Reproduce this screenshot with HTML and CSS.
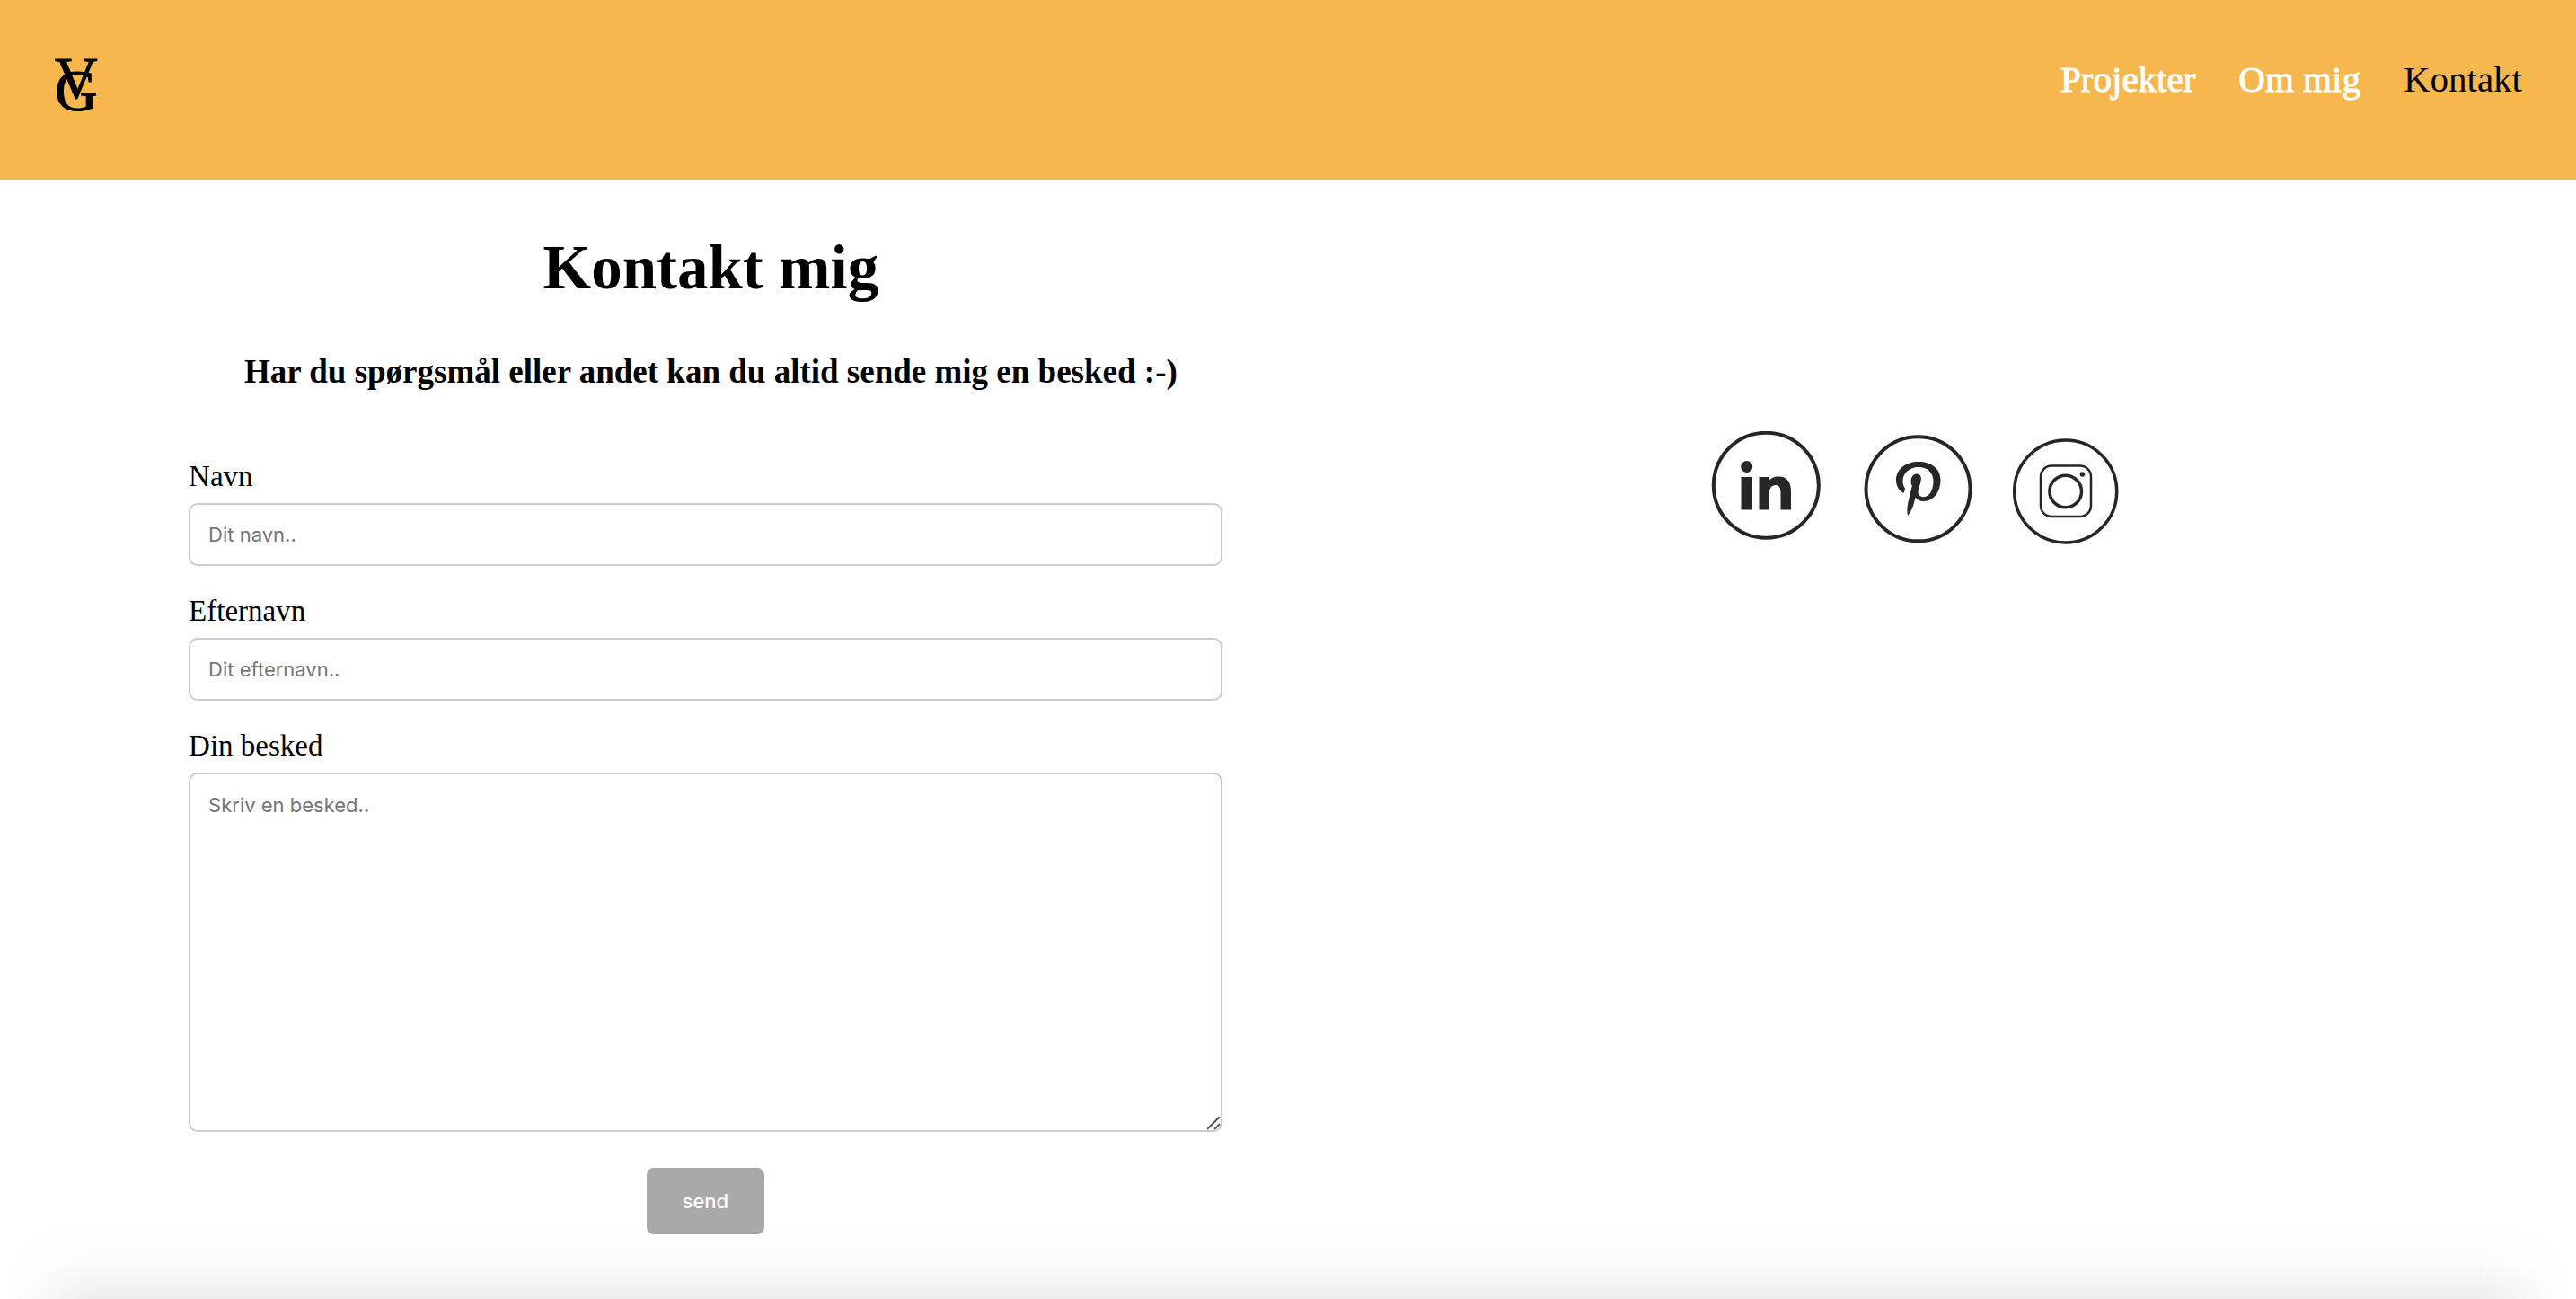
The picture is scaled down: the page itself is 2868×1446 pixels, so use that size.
FILE: index.html
```html
<!DOCTYPE html>
<html lang="da">
<head>
  <meta charset="utf-8">
  <meta name="viewport" content="width=device-width, initial-scale=1">
  <title>Kontakt</title>
  <link rel="stylesheet" href="styles.css">
</head>
<body>
  <header class="site-header">
    <a class="logo" href="#" aria-label="VG">
      <svg width="52" height="76" viewBox="0 0 52 76" aria-hidden="true">
        <text class="logo-letter" x="1" y="63">G</text>
        <text class="logo-letter" x="1" y="49">V</text>
      </svg>
    </a>
    <nav class="site-nav">
      <a href="#">Projekter</a>
      <a href="#">Om mig</a>
      <a class="active" href="#">Kontakt</a>
    </nav>
  </header>

  <main class="contact">
    <section class="contact-main">
      <div class="intro">
        <h1>Kontakt mig</h1>
        <h2>Har du spørgsmål eller andet kan du altid sende mig en besked :-)</h2>
      </div>
      <form class="contact-form">
        <div class="field">
          <label for="fname">Navn</label>
          <input type="text" id="fname" placeholder="Dit navn..">
        </div>
        <div class="field">
          <label for="lname">Efternavn</label>
          <input type="text" id="lname" placeholder="Dit efternavn..">
        </div>
        <div class="field">
          <label for="message">Din besked</label>
          <textarea id="message" placeholder="Skriv en besked.."></textarea>
        </div>
        <button class="send" type="submit">send</button>
      </form>
    </section>

    <section class="social">
      <a href="#" aria-label="LinkedIn">
        <svg width="124" height="128" viewBox="0 0 124 128">
          <circle class="line" cx="62.300" cy="60.300" r="58.500" stroke-width="4"/>
          <circle class="solid" cx="40.700" cy="39.500" r="6.500"/>
          <path class="solid" d="M34.500 51H47v36.500H34.500zM54.500 51H65v5c2-3.600 6-5.500 11-5.500 10 0 14 6 14 17v20H78.500V69c0-6-1.500-9-5.500-9-5 0-7 3.500-7 9v18.500H54.500z"/>
        </svg>
      </a>
      <a href="#" aria-label="Pinterest">
        <svg width="124" height="128" viewBox="0 0 124 128">
          <circle class="line" cx="63.500" cy="64.300" r="58" stroke-width="4"/>
          <path class="solid" d="M47.500 69C42 66 39 60.500 39 54.500 39 42 50 34 64 34c14 0 24.500 7.500 24.500 20.500C88.500 67 81 78 70 78c-4.500 0-8-1.800-9.500-4.500-1.800 8-3 14-8.500 20.500-1.600-8 .3-14 2.500-23.500l2.300-9.500c-3-6-.3-13.500 5.200-13.500 4 0 5.500 3 4.700 7.500-.8 4.500-2.700 8.500-3.100 12-.4 4 2.400 6.200 5.900 6.200 7 0 11-8.500 11-17.500 0-9-6-15.700-16.500-15.700-10.500 0-17.500 7-17.500 15.500 0 4 1.300 6.500 2.700 8.500z"/>
        </svg>
      </a>
      <a href="#" aria-label="Instagram">
        <svg width="124" height="128" viewBox="0 0 124 128">
          <circle class="line" cx="59.700" cy="67" r="57" stroke-width="3.500"/>
          <rect class="line" x="32" y="38.500" width="56" height="56.500" rx="12" stroke-width="2.500"/>
          <circle class="line" cx="59.700" cy="67" r="17.800" stroke-width="3.500"/>
          <circle class="solid" cx="78.500" cy="48" r="2.800"/>
        </svg>
      </a>
    </section>
  </main>
</body>
</html>
```
FILE: styles.css
```css
* {
  box-sizing: border-box;
}

body {
  position: relative;
  min-height: 100vh;
  margin: 0;
  background: #fff;
  color: #000;
  font-family: "Liberation Serif", "Times New Roman", serif;
}

/* soft shadow rising from the bottom edge of the window */
body::after {
  content: "";
  position: absolute;
  bottom: 0;
  left: 0;
  right: 0;
  height: 80px;
  background: linear-gradient(transparent, rgba(0, 0, 0, 0.02) 50%, rgba(0, 0, 0, 0.07));
  mask-image: linear-gradient(90deg, transparent 10px, #000 110px, #000 calc(100% - 110px), transparent calc(100% - 10px));
  pointer-events: none;
}

.site-header {
  display: flex;
  justify-content: space-between;
  align-items: flex-start;
  min-height: 200px;
  padding: 60px 60px 64px;
  background: #f5b74e;
}

.logo,
.logo svg {
  display: block;
}

.logo-letter {
  font-size: 66px;
  fill: #000;
  stroke: #000;
  stroke-width: 1px;
}

.site-nav {
  display: flex;
  gap: 48px;
  padding-top: 4px;
  font-size: 41px;
  line-height: 48px;
}

.site-nav a {
  color: #fff;
  text-decoration: none;
  -webkit-text-stroke: 1px currentColor;
}

.site-nav .active {
  color: #000;
  -webkit-text-stroke: 0;
}

.contact {
  display: grid;
  grid-template-columns: 21fr 22fr;
}

.contact-main {
  padding: 58px 40px 72px 15%;
}

.intro {
  padding-left: 12px;
  text-align: center;
}

h1,
h2 {
  margin: 0;
}

h1 {
  margin-bottom: 52px;
  font-size: 69px;
  line-height: 80px;
}

h2 {
  margin-bottom: 72px;
  font-size: 37px;
  line-height: 48px;
}

.contact-form {
  display: flex;
  flex-direction: column;
  gap: 30px;
}

label {
  display: block;
  margin-bottom: 10px;
  font-size: 33px;
  line-height: 40px;
}

input,
textarea {
  display: block;
  width: 100%;
  margin: 0;
  padding: 20px;
  border: 2px solid #ccc;
  border-radius: 10px;
  background: #fff;
  color: #000;
  font-family: Inter, sans-serif;
  font-size: 22px;
  line-height: 28px;
}

input {
  height: 70px;
}

textarea {
  height: 400px;
  resize: vertical;
}

textarea::-webkit-resizer {
  background: url("data:image/svg+xml,%3Csvg xmlns='http://www.w3.org/2000/svg' width='15' height='15'%3E%3Cpath d='M0 14L14 0M8 14L14 8' stroke='%23555' stroke-width='2'/%3E%3C/svg%3E") no-repeat;
}

::placeholder {
  color: #757575;
}

.send {
  align-self: center;
  height: 74px;
  margin-top: 10px;
  padding: 0 40px;
  border: 0;
  border-radius: 8px;
  background: #a9a9a9;
  color: #fff;
  font-family: Inter, sans-serif;
  font-size: 22px;
  font-weight: 500;
}

.social {
  display: flex;
  justify-content: center;
  align-items: flex-start;
  gap: 44px;
  padding-top: 280px;
}

.social svg {
  display: block;
}

.line {
  fill: none;
  stroke: #262626;
}

.solid {
  fill: #262626;
}
```
